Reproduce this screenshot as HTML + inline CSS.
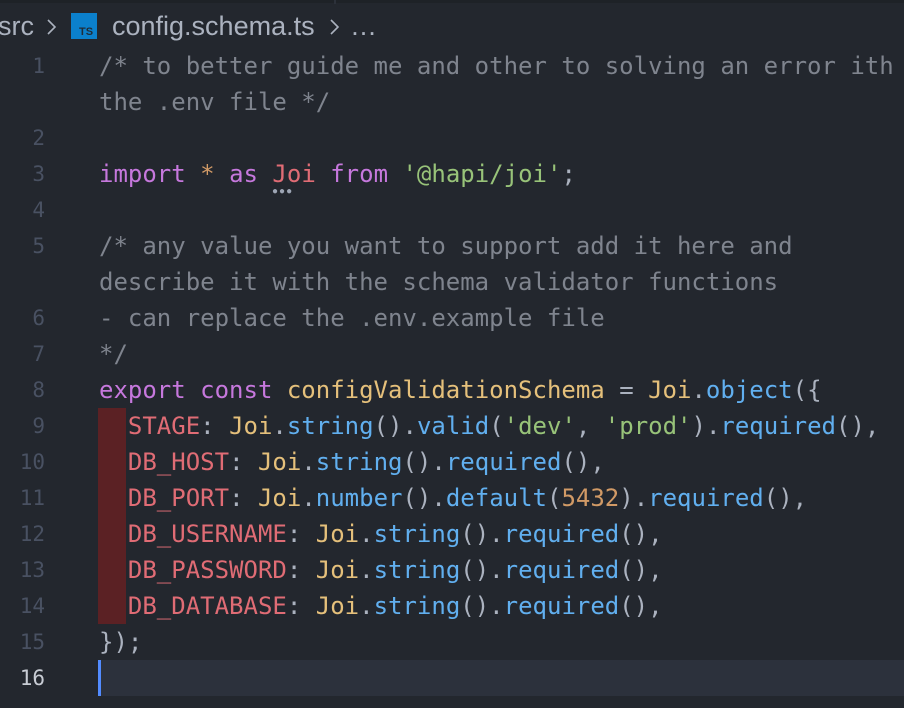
<!DOCTYPE html>
<html><head><style>
body{margin:0;width:904px;height:708px;background:#23272e;overflow:hidden;position:relative;font-family:"DejaVu Sans Mono","Liberation Mono",monospace;}
.top{position:absolute;left:0;top:0;width:904px;height:3px;background:#1e2227}
.top2{position:absolute;left:334px;top:0;width:2px;height:4px;background:#2c313a}
.bt{position:absolute;top:8px;height:36px;line-height:36px;font-family:"Liberation Sans",sans-serif;font-size:27px;color:#abb2bf;white-space:pre}
.ts{position:absolute;left:71px;top:13px;width:26px;height:26px;background:#0b80cc;color:#1f2c38;font:bold 11px "Liberation Sans",sans-serif;}
.ts span{position:absolute;left:8px;bottom:1px}
.chev{position:absolute;top:18px}
.ln{position:absolute;left:0;width:45px;text-align:right;font-size:21px;color:#495162;height:36px;line-height:36px}
.code{position:absolute;left:99px;font-size:24px;height:36px;line-height:36px;white-space:pre;color:#abb2bf}
.c{color:#7f848e}.k{color:#c678dd}.o{color:#d19a66}.y{color:#e5c07b}.g{color:#98c379}.b{color:#61afef}.r{color:#e06c75}
.red{position:absolute;left:98px;top:408px;width:28px;height:216px;background:#5b2124}
.cur{position:absolute;left:98px;top:660px;width:806px;height:36px;background:#2c313c}
.caret{position:absolute;left:98px;top:660px;width:3px;height:36px;background:#528bff}
.dots{position:absolute;left:272px;top:186px;font-size:10px;color:#9da5b4;letter-spacing:1px;font-family:"Liberation Sans",sans-serif}
</style></head><body>
<div class="top"></div><div class="top2"></div>
<div class="bt" style="left:-2px">src</div>
<svg class="chev" style="left:46px" width="12" height="18"><path d="M2 2 L9 9 L2 16" stroke="#abb2bf" stroke-width="1.6" fill="none"/></svg>
<div class="ts"><span>TS</span></div>
<div class="bt" style="left:112px">config.schema.ts</div>
<svg class="chev" style="left:329px" width="12" height="18"><path d="M2 2 L9 9 L2 16" stroke="#abb2bf" stroke-width="1.6" fill="none"/></svg>
<div class="bt" style="left:350px">…</div>
<div class="red"></div><div class="cur"></div><div class="caret"></div>

<div class="ln" style="top:48px">1</div>
<div class="code c" style="top:48px">/* to better guide me and other to solving an error ith</div>
<div class="code c" style="top:84px">the .env file */</div>
<div class="ln" style="top:120px">2</div>
<div class="ln" style="top:156px">3</div>
<div class="code" style="top:156px"><span class="k">import</span> <span class="o">*</span> <span class="k">as</span> <span class="r">Joi</span> <span class="k">from</span> <span class="g">'@hapi/joi'</span>;</div>
<div class="dots">●●●</div>
<div class="ln" style="top:192px">4</div>
<div class="ln" style="top:228px">5</div>
<div class="code c" style="top:228px">/* any value you want to support add it here and</div>
<div class="code c" style="top:264px">describe it with the schema validator functions</div>
<div class="ln" style="top:300px">6</div>
<div class="code c" style="top:300px">- can replace the .env.example file</div>
<div class="ln" style="top:336px">7</div>
<div class="code c" style="top:336px">*/</div>
<div class="ln" style="top:372px">8</div>
<div class="code" style="top:372px"><span class="k">export</span> <span class="k">const</span> <span class="y">configValidationSchema</span> = <span class="y">Joi</span>.<span class="b">object</span>({</div>
<div class="ln" style="top:408px">9</div>
<div class="code" style="top:408px">  <span class="r">STAGE</span>: <span class="y">Joi</span>.<span class="b">string</span>().<span class="b">valid</span>(<span class="g">'dev'</span>, <span class="g">'prod'</span>).<span class="b">required</span>(),</div>
<div class="ln" style="top:444px">10</div>
<div class="code" style="top:444px">  <span class="r">DB_HOST</span>: <span class="y">Joi</span>.<span class="b">string</span>().<span class="b">required</span>(),</div>
<div class="ln" style="top:480px">11</div>
<div class="code" style="top:480px">  <span class="r">DB_PORT</span>: <span class="y">Joi</span>.<span class="b">number</span>().<span class="b">default</span>(<span class="o">5432</span>).<span class="b">required</span>(),</div>
<div class="ln" style="top:516px">12</div>
<div class="code" style="top:516px">  <span class="r">DB_USERNAME</span>: <span class="y">Joi</span>.<span class="b">string</span>().<span class="b">required</span>(),</div>
<div class="ln" style="top:552px">13</div>
<div class="code" style="top:552px">  <span class="r">DB_PASSWORD</span>: <span class="y">Joi</span>.<span class="b">string</span>().<span class="b">required</span>(),</div>
<div class="ln" style="top:588px">14</div>
<div class="code" style="top:588px">  <span class="r">DB_DATABASE</span>: <span class="y">Joi</span>.<span class="b">string</span>().<span class="b">required</span>(),</div>
<div class="ln" style="top:624px">15</div>
<div class="code" style="top:624px">});</div>
<div class="ln" style="top:660px;color:#c8ccd4">16</div>
</body></html>
